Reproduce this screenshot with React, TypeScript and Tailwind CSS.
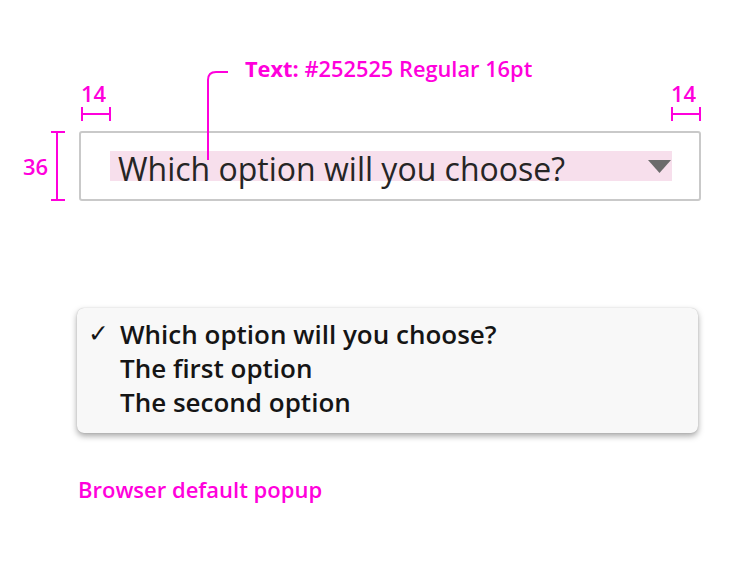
const magenta = "text-[#ff00dc]";

function Annotations() {
  return (
    <>
      <svg
        className="absolute inset-0 pointer-events-none"
        width={740}
        height={584}
        viewBox="0 0 740 584"
        fill="none"
        stroke="#ff00dc"
        strokeWidth={2}
      >
        {/* leader to text */}
        <path d="M208 160 V80 Q208 72 216 72 H228" />
        {/* left 14 */}
        <path d="M82 114 H110 M82 107 V121 M110 107 V121" />
        {/* right 14 */}
        <path d="M672 114 H700 M672 107 V121 M700 107 V121" />
        {/* 36 */}
        <path d="M57 132 V200 M51 132 H65 M51 200 H65" />
      </svg>
      <span className={`absolute left-[81px] top-[80px] text-[22px] leading-[26px] font-semibold ${magenta}`}>
        14
      </span>
      <span className={`absolute left-[671px] top-[80px] text-[22px] leading-[26px] font-semibold ${magenta}`}>
        14
      </span>
      <span className={`absolute left-[23px] top-[153px] text-[22px] leading-[26px] font-semibold ${magenta}`}>
        36
      </span>
    </>
  );
}

export default function App() {
  return (
    <div className="relative w-[740px] h-[584px] bg-white overflow-hidden font-['Open_Sans',sans-serif]">
      <Annotations />

      {/* spec label */}
      <div className={`mt-[56px] pl-[245px] h-[26px] text-[21.8px] leading-[26px] font-semibold whitespace-nowrap ${magenta}`}>
        <span className="font-bold">Text:</span> #252525 Regular 16pt
      </div>

      {/* select box */}
      <div className="mt-[49px] ml-[79px] w-[622px] h-[70px] border-2 border-[#c9c9c9] rounded-[3px] flex items-center pl-[29px] pr-[27px]">
        <div className="flex-1 h-[30px] bg-[#f7dfec] flex items-center justify-between pl-[8px]">
          <span className="text-[32px] leading-[26px] mt-[6px] text-[#252525] whitespace-nowrap">
            Which option will you choose?
          </span>
          <svg width={23} height={13} viewBox="0 0 23 13" className="mr-[1px]">
            <path d="M0 0 H23 L11.5 13 Z" fill="#6b6b6b" />
          </svg>
        </div>
      </div>

      {/* browser popup */}
      <div className="mt-[107px] ml-[77px] w-[621px] h-[125px] rounded-[7px] bg-[#f8f8f8] shadow-[0_3px_6px_rgba(0,0,0,0.35),0_0_1px_rgba(0,0,0,0.25)] pt-[9px] text-[26px] leading-[34px] font-semibold text-[#151515] whitespace-nowrap">
        <div className="flex items-center">
          <span className="w-[43px] pl-[11px] text-[25px] font-['DejaVu_Sans',sans-serif] font-bold">✓</span>
          Which option will you choose?
        </div>
        <div className="pl-[43px]">The first option</div>
        <div className="pl-[43px]">The second option</div>
      </div>

      {/* caption */}
      <div className={`mt-[41px] ml-[78px] text-[22px] leading-[30px] font-semibold ${magenta}`}>
        Browser default popup
      </div>
    </div>
  );
}
